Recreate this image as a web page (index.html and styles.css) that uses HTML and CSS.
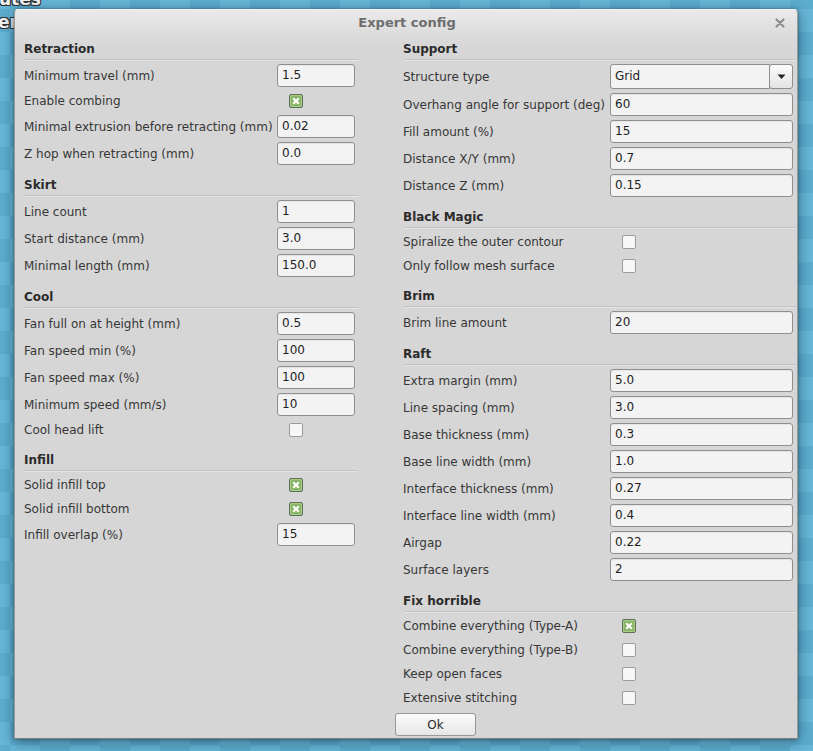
FILE: index.html
```html
<!DOCTYPE html>
<html>
<head>
<meta charset="utf-8">
<title>Expert config</title>
<link rel="stylesheet" href="styles.css">
</head>
<body>
<div class="desktop">
  <div class="bgtext bg1">utes</div>
  <div class="bgtext bg2">er</div>

  <div class="dialog">
    <div class="titlebar">
      <span class="title">Expert config</span>
      <svg class="close" width="10" height="10" viewBox="0 0 10 10"><path d="M1.5 1.5 L8.5 8.5 M8.5 1.5 L1.5 8.5" stroke="#8c8c8c" stroke-width="2.2" stroke-linecap="round"/></svg>
    </div>
    <div class="body">
      <div class="col col-left">
        <section class="sec">
          <h3 class="head">Retraction</h3>
          <div class="row"><span class="lbl">Minimum travel (mm)</span><span class="inp">1.5</span></div>
          <div class="row row-cb"><span class="lbl">Enable combing</span><span class="cb on"></span></div>
          <div class="row"><span class="lbl">Minimal extrusion before retracting (mm)</span><span class="inp">0.02</span></div>
          <div class="row"><span class="lbl">Z hop when retracting (mm)</span><span class="inp">0.0</span></div>
        </section>
        <section class="sec">
          <h3 class="head">Skirt</h3>
          <div class="row"><span class="lbl">Line count</span><span class="inp">1</span></div>
          <div class="row"><span class="lbl">Start distance (mm)</span><span class="inp">3.0</span></div>
          <div class="row"><span class="lbl">Minimal length (mm)</span><span class="inp">150.0</span></div>
        </section>
        <section class="sec">
          <h3 class="head">Cool</h3>
          <div class="row"><span class="lbl">Fan full on at height (mm)</span><span class="inp">0.5</span></div>
          <div class="row"><span class="lbl">Fan speed min (%)</span><span class="inp">100</span></div>
          <div class="row"><span class="lbl">Fan speed max (%)</span><span class="inp">100</span></div>
          <div class="row"><span class="lbl">Minimum speed (mm/s)</span><span class="inp">10</span></div>
          <div class="row row-cb"><span class="lbl">Cool head lift</span><span class="cb"></span></div>
        </section>
        <section class="sec">
          <h3 class="head">Infill</h3>
          <div class="row row-cb"><span class="lbl">Solid infill top</span><span class="cb on"></span></div>
          <div class="row row-cb"><span class="lbl">Solid infill bottom</span><span class="cb on"></span></div>
          <div class="row"><span class="lbl">Infill overlap (%)</span><span class="inp">15</span></div>
        </section>
      </div>

      <div class="col col-right">
        <section class="sec">
          <h3 class="head">Support</h3>
          <div class="row row-combo"><span class="lbl">Structure type</span>
            <span class="combo"><span class="combo-field">Grid</span><span class="combo-btn"><svg width="9" height="6" viewBox="0 0 9 6"><path d="M0.5 0.5 L8.5 0.5 L4.5 5 Z" fill="#222"/></svg></span></span>
          </div>
          <div class="row"><span class="lbl">Overhang angle for support (deg)</span><span class="inp">60</span></div>
          <div class="row"><span class="lbl">Fill amount (%)</span><span class="inp">15</span></div>
          <div class="row"><span class="lbl">Distance X/Y (mm)</span><span class="inp">0.7</span></div>
          <div class="row"><span class="lbl">Distance Z (mm)</span><span class="inp">0.15</span></div>
        </section>
        <section class="sec">
          <h3 class="head">Black Magic</h3>
          <div class="row row-cb"><span class="lbl">Spiralize the outer contour</span><span class="cb"></span></div>
          <div class="row row-cb"><span class="lbl">Only follow mesh surface</span><span class="cb"></span></div>
        </section>
        <section class="sec">
          <h3 class="head">Brim</h3>
          <div class="row"><span class="lbl">Brim line amount</span><span class="inp">20</span></div>
        </section>
        <section class="sec">
          <h3 class="head">Raft</h3>
          <div class="row"><span class="lbl">Extra margin (mm)</span><span class="inp">5.0</span></div>
          <div class="row"><span class="lbl">Line spacing (mm)</span><span class="inp">3.0</span></div>
          <div class="row"><span class="lbl">Base thickness (mm)</span><span class="inp">0.3</span></div>
          <div class="row"><span class="lbl">Base line width (mm)</span><span class="inp">1.0</span></div>
          <div class="row"><span class="lbl">Interface thickness (mm)</span><span class="inp">0.27</span></div>
          <div class="row"><span class="lbl">Interface line width (mm)</span><span class="inp">0.4</span></div>
          <div class="row"><span class="lbl">Airgap</span><span class="inp">0.22</span></div>
          <div class="row"><span class="lbl">Surface layers</span><span class="inp">2</span></div>
        </section>
        <section class="sec">
          <h3 class="head">Fix horrible</h3>
          <div class="row row-cb"><span class="lbl">Combine everything (Type-A)</span><span class="cb on"></span></div>
          <div class="row row-cb"><span class="lbl">Combine everything (Type-B)</span><span class="cb"></span></div>
          <div class="row row-cb"><span class="lbl">Keep open faces</span><span class="cb"></span></div>
          <div class="row row-cb"><span class="lbl">Extensive stitching</span><span class="cb"></span></div>
        </section>
        <button class="ok">Ok</button>
      </div>
    </div>
  </div>
</div>
</body>
</html>
```
FILE: styles.css
```css
html, body {
  margin: 0;
  padding: 0;
}
body {
  width: 813px;
  height: 751px;
  overflow: hidden;
  font-family: "DejaVu Sans", sans-serif;
  font-size: 12px;
  color: #333;
}
.desktop {
  position: relative;
  width: 813px;
  height: 751px;
  background-color: #62b2d4;
  background-image:
    repeating-conic-gradient(#68b7d8 0 25%, #5dadcf 0 50%);
  background-size: 60px 46px;
  background-position: 10px -14px;
  overflow: hidden;
}
.bgtext {
  position: absolute;
  font-family: "DejaVu Sans", sans-serif;
  font-weight: bold;
  font-size: 17px;
  color: #f4f4f4;
  text-shadow: 1px 1px 0 #333, -1px -1px 0 #333, 1px -1px 0 #333, -1px 1px 0 #333;
  line-height: 20px;
}
.bg1 { left: -1px; top: -11px; }
.bg2 { left: -2px; top: 12px; }

.dialog {
  position: absolute;
  left: 14px;
  top: 9px;
  width: 782px;
  height: 728px;
  border: 1px solid #9a9a9a;
  border-top-color: #f2f2f2;
  border-bottom-color: #7c7c7c;
  border-radius: 4px 4px 0 0;
  background: linear-gradient(#eaeaea 0px, #dadada 28px, #d6d6d6 40px, #d6d6d6 100%);
  box-shadow: 0 3px 14px rgba(10, 40, 60, 0.55), 0 0 3px rgba(0, 0, 0, 0.35);
  display: flex;
  flex-direction: column;
}
.titlebar {
  height: 22px;
  flex: none;
  display: flex;
  align-items: center;
  justify-content: center;
  position: relative;
}
.title {
  font-weight: bold;
  font-size: 13px;
  color: #6e6e6e;
  margin-left: 2px;
  margin-top: 2px;
}
.close {
  position: absolute;
  right: 12px;
  top: 8px;
}
.body {
  display: grid;
  grid-template-columns: 334px 394px;
  column-gap: 45px;
  padding: 7px 0 0 9px;
}
.col {
  display: flex;
  flex-direction: column;
}
.sec {
  display: flex;
  flex-direction: column;
  gap: 4px;
  margin-bottom: 10px;
}
.head {
  margin: 0;
  height: 20px;
  line-height: 20px;
  font-size: 12px;
  font-weight: bold;
  color: #2b2b2b;
  border-bottom: 1px solid #c2c2c2;
  box-shadow: 0 1px 0 #e4e4e4;
  box-sizing: content-box;
}
.row {
  display: grid;
  align-items: center;
  height: 23px;
}
.col-left .row {
  grid-template-columns: 253px 78px;
}
.col-right .row {
  grid-template-columns: 207px 183px;
}
.row-cb {
  height: 20px;
}
.row-combo {
  height: 25px;
}
.lbl {
  color: #363636;
  white-space: nowrap;
  line-height: 16px;
}
.inp {
  box-sizing: border-box;
  height: 23px;
  line-height: 21px;
  padding-left: 4px;
  background: #f3f3f3;
  border: 1px solid #8f8f8f;
  border-radius: 3px;
  color: #1e1e1e;
  box-shadow: inset 0 1px 1px rgba(0, 0, 0, 0.06);
}
.cb {
  display: block;
  box-sizing: border-box;
  width: 14px;
  height: 14px;
  margin-left: 12px;
  border: 1px solid #9b9b9b;
  border-radius: 2px;
  background: #f7f7f7;
  position: relative;
}
.cb.on {
  background: #8ab468;
  border-color: #5f6e56;
  box-shadow: inset 0 0 0 1px #a9cc86;
}
.cb.on::before,
.cb.on::after {
  content: "";
  position: absolute;
  left: 2px;
  top: 5px;
  width: 8px;
  height: 2px;
  background: #ffffff;
  transform: rotate(45deg);
}
.cb.on::after {
  transform: rotate(-45deg);
}
.combo {
  display: flex;
  height: 25px;
}
.combo-field {
  flex: 1;
  box-sizing: border-box;
  height: 25px;
  line-height: 23px;
  padding-left: 4px;
  background: #f3f3f3;
  border: 1px solid #8f8f8f;
  border-radius: 3px 0 0 3px;
  color: #1e1e1e;
}
.combo-btn {
  box-sizing: border-box;
  width: 24px;
  height: 25px;
  margin-left: -1px;
  border: 1px solid #8f8f8f;
  border-radius: 3px;
  background: linear-gradient(#fbfbfb, #e4e4e4);
  display: flex;
  align-items: center;
  justify-content: center;
}
.ok {
  align-self: flex-start;
  margin: -5px 0 0 -8px;
  width: 81px;
  height: 23px;
  box-sizing: border-box;
  border: 1px solid #979797;
  border-radius: 3px;
  background: linear-gradient(#fbfbfb, #e6e6e6);
  font-family: "DejaVu Sans", sans-serif;
  font-size: 12px;
  color: #2a2a2a;
  padding: 0;
}
```
